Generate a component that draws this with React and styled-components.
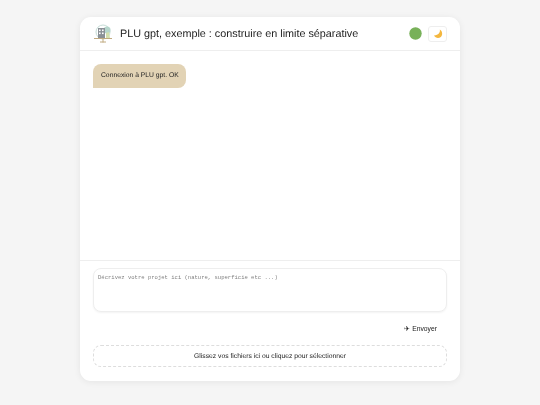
import React from "react";
import styled, { createGlobalStyle } from "styled-components";

const Global = createGlobalStyle`
  html, body { margin: 0; padding: 0; background: #f5f5f5; }
  body { font-family: "Liberation Sans", Arial, sans-serif; text-rendering: geometricPrecision; }
  * { box-sizing: border-box; }
`;
const Page = styled.div`
  width: 540px; height: 405px; padding-top: 17px; display: flex; justify-content: center; align-items: flex-start;
`;
const Card = styled.main`
  width: 380px; height: 364px; background: #fff; border-radius: 11px; will-change: transform;
  box-shadow: 0 1px 7px rgba(0,0,0,.07); display: flex; flex-direction: column; overflow: hidden;
`;
const Header = styled.header`
  flex: none; height: 34px; border-bottom: 1px solid #eeeeee;
  display: flex; align-items: center; padding: 0 13px;
`;
const Logo = styled.svg`width: 20px; height: 20px; flex: none; margin-right: 7px;`;
const Title = styled.h1`
  margin: 0; flex: 1; font-weight: 400; font-size: 10.8px; color: #222; white-space: nowrap;
`;
const Status = styled.svg`width: 13px; height: 13px; margin-right: 6px; flex: none;`;
const ThemeButton = styled.button`
  width: 19px; height: 16px; padding: 0; border: 1px solid #eee; border-radius: 3px; background: #fff; flex: none;
  display: flex; align-items: center; justify-content: center;
`;
const Messages = styled.section`flex: 1; padding: 13px; min-height: 0;`;
const Bubble = styled.div`
  display: block; background: #e2d3b5; color: #222; font-size: 6.75px; line-height: 12px;
  padding: 6px 8px; border-radius: 8px 8px 8px 0; width: 93px; height: 24px; white-space: nowrap;
`;
const Footer = styled.footer`
  flex: none; height: 121px; border-top: 1px solid #eee; padding: 7px 13px 14px; display: flex; flex-direction: column;
`;
const Input = styled.textarea`
  display: block; width: 100%; height: 44px; flex: none; resize: none; border: 1px solid #eee; border-radius: 8px;
  padding: 5px 4px 4px; font-family: "Liberation Mono", monospace; font-size: 5.55px; line-height: 8px; outline: none;
  box-shadow: 0 1px 2px rgba(0,0,0,.05);
  &::placeholder { color: #808080; opacity: 1; }
`;
const Send = styled.button`
  align-self: flex-end; border: 0; background: none; margin: 8px 10px 7px 0; padding: 0; height: 18px;
  font-family: inherit; font-size: 6.75px; color: #222; white-space: nowrap;
`;
const Drop = styled.div`
  height: 22px; border: 1px dashed #ddd; border-radius: 8px; display: flex; align-items: center; justify-content: center;
  font-size: 6.75px; color: #222;
`;

export default function App() {
  return (
    <Page>
      <Global />
      <Card>
        <Header>
          <Logo viewBox="0 0 20 20">
            <circle cx="10" cy="8" r="7" fill="none" stroke="#c5dcd6" strokeWidth="1" />
            <circle cx="14" cy="6" r="3.5" fill="#b6d6cc" />
            <rect x="5" y="4" width="7" height="10" fill="#8a9096" />
            <rect x="6" y="5.5" width="1.6" height="1.6" fill="#fff" />
            <rect x="9" y="5.5" width="1.6" height="1.6" fill="#fff" />
            <rect x="6" y="8.5" width="1.6" height="1.6" fill="#fff" />
            <rect x="9" y="8.5" width="1.6" height="1.6" fill="#fff" />
            <path d="M13 14V9l3-1 1 6z" fill="#d3dfae" />
            <path d="M1 14.5h18" stroke="#c0aa80" strokeWidth="1" />
            <path d="M10 14.5v4M7 18h6" stroke="#c0aa80" strokeWidth="1" />
          </Logo>
          <Title>PLU gpt, exemple : construire en limite séparative</Title>
          <Status viewBox="0 0 13 13"><circle cx="6.5" cy="6.5" r="6.2" fill="#78b159" /></Status>
          <ThemeButton aria-label="Thème">
            <svg width="10" height="10" viewBox="0 0 10 10"><path d="M6.8 .6C7.4 3.6 5.6 6.2 1 6.6 2.2 9 5.6 9.8 7.8 8 10 6.2 9.6 2.2 6.8 .6z" fill="#f4b73f" /></svg>
          </ThemeButton>
        </Header>
        <Messages><Bubble>Connexion à PLU gpt. OK</Bubble></Messages>
        <Footer>
          <Input placeholder="Décrivez votre projet ici (nature, superficie etc ...)" />
          <Send>✈ Envoyer</Send>
          <Drop>Glissez vos fichiers ici ou cliquez pour sélectionner</Drop>
        </Footer>
      </Card>
    </Page>
  );
}
